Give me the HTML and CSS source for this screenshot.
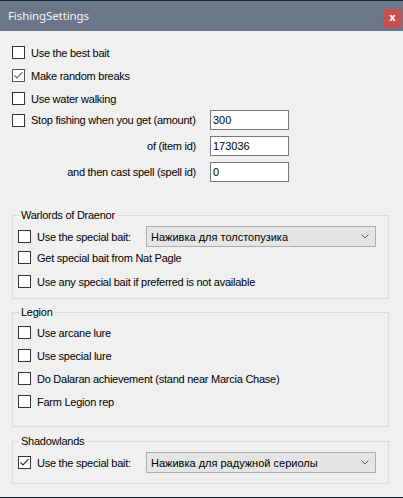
FILE: index.html
```html
<!DOCTYPE html>
<html>
<head>
<meta charset="utf-8">
<link rel="stylesheet" href="styles.css">
</head>
<body>
<div class="window">
  <div class="titlebar">
    <span class="title">FishingSettings</span>
    <span class="close">x</span>
  </div>
  <div class="content">
    <div class="row"><span class="cb"></span><span>Use the best bait</span></div>
    <div class="row"><span class="cb soft"><svg width="13" height="13" viewBox="0 0 13 13"><path d="M2.5 6.5 L5 9 L10.5 3.2" fill="none" stroke="#6a6a6a" stroke-width="1.2"/></svg></span><span>Make random breaks</span></div>
    <div class="row"><span class="cb"></span><span>Use water walking</span></div>
    <div class="fields">
      <div class="field-label"><span class="cb"></span><span>Stop fishing when you get (amount)</span></div>
      <div class="textbox">300</div>
      <div class="field-label right">of (item id)</div>
      <div class="textbox">173036</div>
      <div class="field-label right">and then cast spell (spell id)</div>
      <div class="textbox">0</div>
    </div>

    <fieldset class="group wod">
      <legend>Warlords of Draenor</legend>
      <div class="grow first"><span class="cb"></span><span class="wide-label">Use the special bait:</span>
        <div class="select"><span>Наживка для толстопузика</span><svg width="8" height="5" viewBox="0 0 8 5"><path d="M0.5 0.5 L4 4 L7.5 0.5" fill="none" stroke="#606060" stroke-width="1"/></svg></div>
      </div>
      <div class="grow"><span class="cb"></span><span>Get special bait from Nat Pagle</span></div>
      <div class="grow third"><span class="cb"></span><span>Use any special bait if preferred is not available</span></div>
    </fieldset>

    <fieldset class="group legion">
      <legend>Legion</legend>
      <div class="lrow"><span class="cb"></span><span>Use arcane lure</span></div>
      <div class="lrow"><span class="cb"></span><span>Use special lure</span></div>
      <div class="lrow"><span class="cb"></span><span>Do Dalaran achievement (stand near Marcia Chase)</span></div>
      <div class="lrow"><span class="cb"></span><span>Farm Legion rep</span></div>
    </fieldset>

    <fieldset class="group shadow">
      <legend>Shadowlands</legend>
      <div class="grow first"><span class="cb"><svg width="13" height="13" viewBox="0 0 13 13"><path d="M2.5 6.5 L5 9 L10.5 3.2" fill="none" stroke="#333" stroke-width="1.2"/></svg></span><span class="wide-label">Use the special bait:</span>
        <div class="select"><span>Наживка для радужной сериолы</span><svg width="8" height="5" viewBox="0 0 8 5"><path d="M0.5 0.5 L4 4 L7.5 0.5" fill="none" stroke="#606060" stroke-width="1"/></svg></div>
      </div>
    </fieldset>
  </div>
</div>
</body>
</html>
```

FILE: styles.css
```css
* { box-sizing: border-box; }
html, body { margin: 0; padding: 0; }
body {
  width: 403px;
  height: 498px;
  overflow: hidden;
  font-family: "Liberation Sans", Arial, sans-serif;
  font-size: 11px;
  color: #000;
  background: #f0f0f0;
}
.window {
  height: 498px;
  display: flex;
  flex-direction: column;
  border-top: 1px solid #1d2535;
  border-bottom: 1px solid #1d2535;
}
.titlebar {
  height: 30px;
  flex: none;
  background: #6b7789;
  display: flex;
  justify-content: space-between;
  align-items: flex-start;
  padding-left: 8px;
}
.title {
  font-family: "Noto Sans", "Open Sans", sans-serif;
  font-size: 11.5px;
  letter-spacing: -0.1px;
  line-height: 30px;
  color: #f3f5f8;
}
.close {
  width: 19px;
  height: 19px;
  margin-top: 8px;
  margin-right: 1px;
  background: #c74f4f;
  color: #fff;
  font-weight: bold;
  font-size: 10px;
  line-height: 18px;
  text-align: center;
  font-family: "DejaVu Sans", sans-serif;
}
.content {
  flex: 1;
  padding: 10px 0 0 12px;
  letter-spacing: -0.25px;
}
.row {
  height: 23px;
  display: flex;
  align-items: center;
  white-space: nowrap;
}
.cb {
  width: 13px;
  height: 13px;
  flex: none;
  border: 1px solid #333;
  background: #fff;
  margin-right: 6px;
  position: relative;
}
.cb svg {
  position: absolute;
  left: -1px;
  top: -1px;
}
.cb.soft { border-color: #555; }
.fields {
  display: grid;
  grid-template-columns: 185px 79px;
  grid-auto-rows: 20px;
  column-gap: 13px;
  row-gap: 6px;
}
.field-label {
  display: flex;
  align-items: center;
  white-space: nowrap;
}
.field-label.right { justify-content: flex-end; padding-right: 1px; }
.textbox {
  border: 1px solid #7a7a7a;
  background: #fff;
  padding-left: 2px;
  line-height: 18px;
  letter-spacing: 0;
}
.group {
  border: 1px solid #dcdcdc;
  margin: 0 14px 0 0;
  padding: 0 5px 6px 5px;
  min-width: 0;
}
.group legend {
  padding: 0 2px;
  margin-left: 1px;
  line-height: 13px;
  font-size: 11px;
}
.wod { margin-top: 27px; }
.legion { margin-top: 7px; padding-bottom: 13px; }
.shadow { margin-top: 8px; padding-bottom: 10px; }
.grow {
  height: 21px;
  display: flex;
  align-items: center;
  white-space: nowrap;
}
.grow.first { margin-top: 4px; }
.grow.third { margin-top: 3px; }
.lrow {
  height: 23px;
  display: flex;
  align-items: center;
  white-space: nowrap;
}
.legion legend + .lrow { margin-top: 2px; }
.wide-label { width: 109px; }
.select {
  width: 230px;
  height: 21px;
  border: 1px solid #adadad;
  background: #e5e5e5;
  display: flex;
  align-items: center;
  justify-content: space-between;
  padding: 0 6px 0 4px;
  letter-spacing: 0;
}
```
